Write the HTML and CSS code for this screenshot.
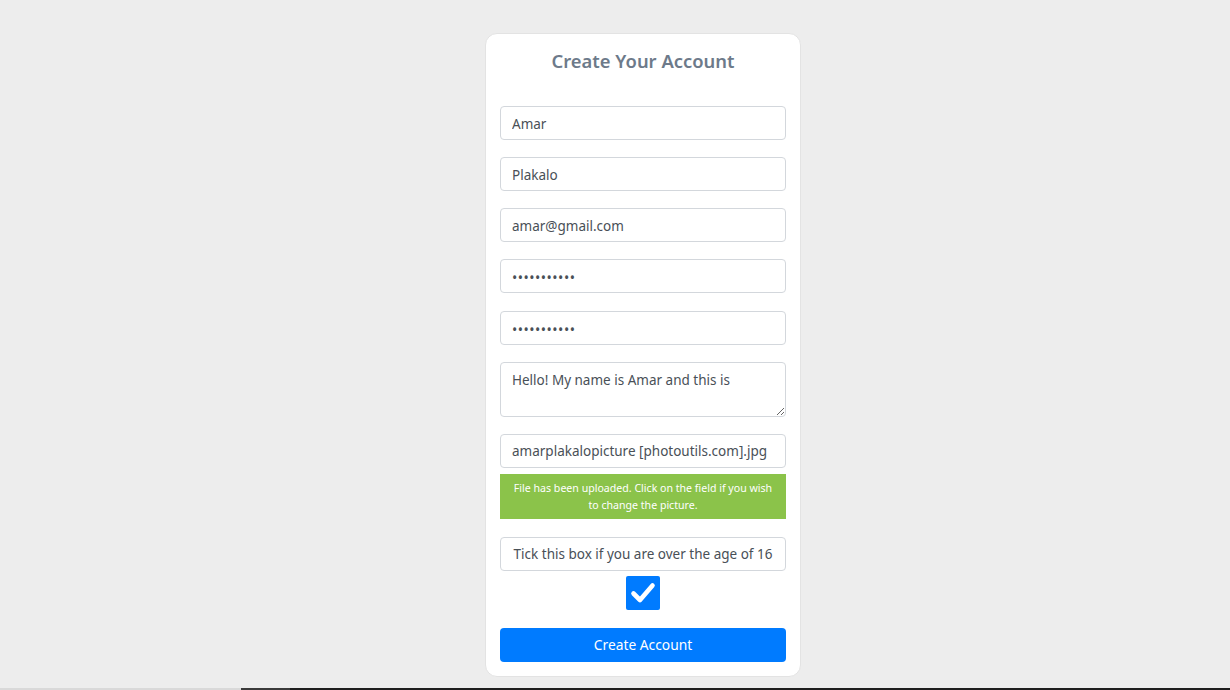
FILE: index.html
```html
<!DOCTYPE html>
<html lang="en">
<head>
<meta charset="utf-8">
<title>Create Your Account</title>
<link rel="stylesheet" href="styles.css">
</head>
<body>
<div class="screen">
  <main class="stage">
    <form class="card">
      <h1 class="title">Create Your Account</h1>
      <div class="fields">
        <input class="field" type="text" value="Amar">
        <input class="field" type="text" value="Plakalo">
        <input class="field" type="email" value="amar@gmail.com">
        <input class="field" type="password" value="amarplakalo">
        <input class="field confirm" type="password" value="amarplakalo">
        <textarea class="field area">Hello! My name is Amar and this is</textarea>
        <div class="upload">
          <div class="field file">amarplakalopicture [photoutils.com].jpg</div>
          <div class="notice">File has been uploaded. Click on the field if you wish to change the picture.</div>
        </div>
        <div class="age">
          <div class="field age-label">Tick this box if you are over the age of 16</div>
          <span class="check">
            <svg width="26" height="24" viewBox="0 0 26 24"><path d="M3.5 12.5 L10 19 L22.5 4.5" fill="none" stroke="#fff" stroke-width="4.6" stroke-linecap="round" stroke-linejoin="round"/></svg>
          </span>
        </div>
        <button class="submit" type="button">Create Account</button>
      </div>
    </form>
  </main>
  <div class="taskbar">
    <span class="tb-left"></span>
    <span class="tb-mid"></span>
    <span class="tb-right"></span>
  </div>
</div>
</body>
</html>
```

FILE: styles.css
```css
* { box-sizing: border-box; }
html, body { margin: 0; padding: 0; }
body {
  background: #ededed;
  font-family: "Noto Sans", "Open Sans", sans-serif;
  color: #495057;
}
.screen {
  height: 690px;
  display: flex;
  flex-direction: column;
}
.stage {
  flex: 1;
  display: flex;
  justify-content: center;
  padding-top: 33px;
  padding-left: 56px;
}
.card {
  width: 316px;
  height: 644px;
  background: #fff;
  border: 1px solid #e3e3e3;
  border-radius: 12px;
  padding: 14px;
  margin: 0;
}
.title {
  margin: 0;
  text-align: center;
  font-size: 18.4px;
  font-weight: 600;
  color: #6d7a8a;
  line-height: 26px;
}
.fields {
  margin-top: 32px;
  display: flex;
  flex-direction: column;
  gap: 17px;
}
.field {
  display: block;
  width: 286px;
  height: 34px;
  border: 1px solid #d3d7dc;
  border-radius: 4px;
  padding: 0 11px;
  font-family: inherit;
  font-size: 13.5px;
  color: #495057;
  background: #fff;
  outline: none;
  margin: 0;
  line-height: 33px;
}
input.field {
  padding-top: 2px;
  padding-bottom: 0;
}
input[type="password"].field {
  font-size: 14px;
  letter-spacing: 0.5px;
}
.confirm { margin-top: 1px; }
.area {
  height: 55px;
  resize: vertical;
  line-height: 20px;
  padding-top: 7px;
  overflow: hidden;
}
.upload {
  display: flex;
  flex-direction: column;
  gap: 6px;
}
.file {
  white-space: nowrap;
  overflow: hidden;
}
.notice {
  width: 286px;
  height: 45px;
  background: #8bc34a;
  color: #fff;
  font-size: 10.6px;
  line-height: 17px;
  text-align: center;
  padding: 6px 10px 0;
}
.age {
  display: flex;
  flex-direction: column;
  align-items: center;
  gap: 5px;
  margin-top: 1px;
}
.age-label {
  text-align: center;
  padding: 0;
  white-space: nowrap;
}
.check {
  width: 34px;
  height: 34px;
  background: #007bff;
  border-radius: 2px;
  display: flex;
  align-items: center;
  justify-content: center;
}
.submit {
  margin-top: 1px;
  width: 286px;
  height: 34px;
  border: none;
  border-radius: 4px;
  background: #007bff;
  color: #fff;
  font-family: inherit;
  font-size: 13.8px;
  padding: 0 0 2px;
}
.taskbar {
  height: 2px;
  display: flex;
}
.tb-left { width: 241px; background: #d9d9d9; }
.tb-mid { width: 49px; background: #3a3a3a; }
.tb-right { flex: 1; background: #1f1f1f; }
```
